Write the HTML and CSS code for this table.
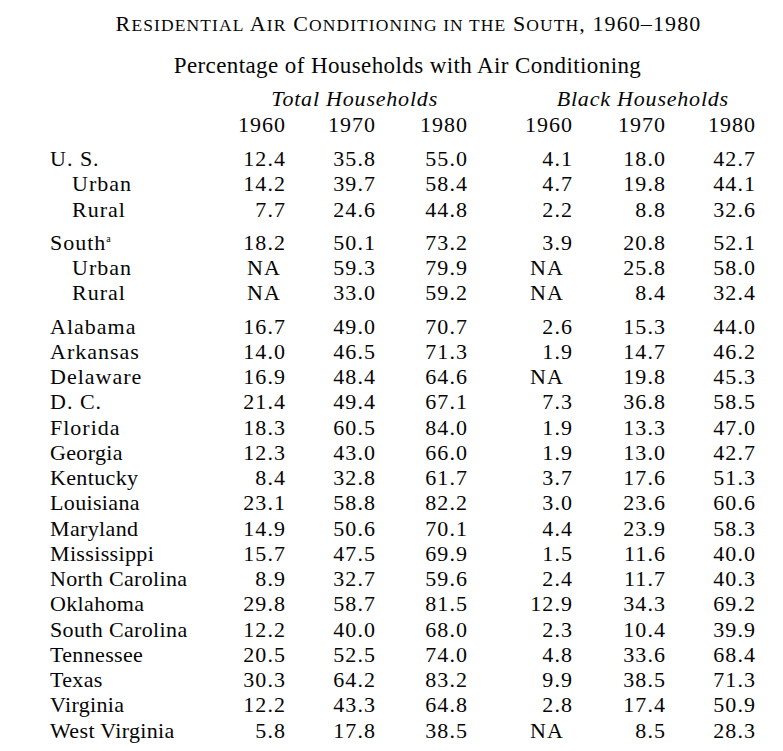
FILE: index.html
```html
<!DOCTYPE html>
<html>
<head>
<meta charset="utf-8">
<link rel="stylesheet" href="styles.css">
</head>
<body>
<div class="page">
  <h1 class="title"><span class="cap">R</span><span class="sc">esidential</span> <span class="cap">A</span><span class="sc">ir</span> <span class="cap">C</span><span class="sc">onditioning in the</span> <span class="cap">S</span><span class="sc">outh</span>, 1960–1980</h1>
  <h2 class="subtitle">Percentage of Households with Air Conditioning</h2>
  <div class="table">
    <div class="grp-head grp-total">Total Households</div>
    <div class="grp-head grp-black">Black Households</div>

    <div class="yr c1">1960</div><div class="yr">1970</div><div class="yr">1980</div>
    <div class="yr">1960</div><div class="yr">1970</div><div class="yr">1980</div>
  </div>

  <div class="table body wide">
    <div class="lbl first">U. S.</div><div class="n first">12.4</div><div class="n first">35.8</div><div class="n first">55.0</div><div class="n first">4.1</div><div class="n first">18.0</div><div class="n first">42.7</div>
    <div class="lbl sub">Urban</div><div class="n">14.2</div><div class="n">39.7</div><div class="n">58.4</div><div class="n">4.7</div><div class="n">19.8</div><div class="n">44.1</div>
    <div class="lbl sub">Rural</div><div class="n">7.7</div><div class="n">24.6</div><div class="n">44.8</div><div class="n">2.2</div><div class="n">8.8</div><div class="n">32.6</div>

    <div class="lbl gap">South<sup class="fn">a</sup></div><div class="n gap">18.2</div><div class="n gap">50.1</div><div class="n gap">73.2</div><div class="n gap">3.9</div><div class="n gap">20.8</div><div class="n gap">52.1</div>
    <div class="lbl sub">Urban</div><div class="n na">NA</div><div class="n">59.3</div><div class="n">79.9</div><div class="n na4">NA</div><div class="n">25.8</div><div class="n">58.0</div>
    <div class="lbl sub">Rural</div><div class="n na">NA</div><div class="n">33.0</div><div class="n">59.2</div><div class="n na4">NA</div><div class="n">8.4</div><div class="n">32.4</div>

    <div class="lbl gap">Alabama</div><div class="n gap">16.7</div><div class="n gap">49.0</div><div class="n gap">70.7</div><div class="n gap">2.6</div><div class="n gap">15.3</div><div class="n gap">44.0</div>
    <div class="lbl">Arkansas</div><div class="n">14.0</div><div class="n">46.5</div><div class="n">71.3</div><div class="n">1.9</div><div class="n">14.7</div><div class="n">46.2</div>
    <div class="lbl">Delaware</div><div class="n">16.9</div><div class="n">48.4</div><div class="n">64.6</div><div class="n na4">NA</div><div class="n">19.8</div><div class="n">45.3</div>
    <div class="lbl">D. C.</div><div class="n">21.4</div><div class="n">49.4</div><div class="n">67.1</div><div class="n">7.3</div><div class="n">36.8</div><div class="n">58.5</div>
    <div class="lbl">Florida</div><div class="n">18.3</div><div class="n">60.5</div><div class="n">84.0</div><div class="n">1.9</div><div class="n">13.3</div><div class="n">47.0</div>
  </div>

  <div class="table body narrow">
    <div class="lbl">Georgia</div><div class="n">12.3</div><div class="n">43.0</div><div class="n">66.0</div><div class="n">1.9</div><div class="n">13.0</div><div class="n">42.7</div>
    <div class="lbl">Kentucky</div><div class="n">8.4</div><div class="n">32.8</div><div class="n">61.7</div><div class="n">3.7</div><div class="n">17.6</div><div class="n">51.3</div>
    <div class="lbl">Louisiana</div><div class="n">23.1</div><div class="n">58.8</div><div class="n">82.2</div><div class="n">3.0</div><div class="n">23.6</div><div class="n">60.6</div>
    <div class="lbl">Maryland</div><div class="n">14.9</div><div class="n">50.6</div><div class="n">70.1</div><div class="n">4.4</div><div class="n">23.9</div><div class="n">58.3</div>
    <div class="lbl">Mississippi</div><div class="n">15.7</div><div class="n">47.5</div><div class="n">69.9</div><div class="n">1.5</div><div class="n">11.6</div><div class="n">40.0</div>
    <div class="lbl">North Carolina</div><div class="n">8.9</div><div class="n">32.7</div><div class="n">59.6</div><div class="n">2.4</div><div class="n">11.7</div><div class="n">40.3</div>
    <div class="lbl">Oklahoma</div><div class="n">29.8</div><div class="n">58.7</div><div class="n">81.5</div><div class="n">12.9</div><div class="n">34.3</div><div class="n">69.2</div>
    <div class="lbl">South Carolina</div><div class="n">12.2</div><div class="n">40.0</div><div class="n">68.0</div><div class="n">2.3</div><div class="n">10.4</div><div class="n">39.9</div>
    <div class="lbl">Tennessee</div><div class="n">20.5</div><div class="n">52.5</div><div class="n">74.0</div><div class="n">4.8</div><div class="n">33.6</div><div class="n">68.4</div>
    <div class="lbl">Texas</div><div class="n">30.3</div><div class="n">64.2</div><div class="n">83.2</div><div class="n">9.9</div><div class="n">38.5</div><div class="n">71.3</div>
    <div class="lbl">Virginia</div><div class="n">12.2</div><div class="n">43.3</div><div class="n">64.8</div><div class="n">2.8</div><div class="n">17.4</div><div class="n">50.9</div>
    <div class="lbl">West Virginia</div><div class="n">5.8</div><div class="n">17.8</div><div class="n">38.5</div><div class="n na4">NA</div><div class="n">8.5</div><div class="n">28.3</div>
  </div>
</div>
</body>
</html>
```

FILE: styles.css
```css
html, body {
  margin: 0;
  padding: 0;
  background: #ffffff;
}
body {
  font-family: "Liberation Serif", "Times New Roman", serif;
  color: #050505;
}
.page {
  width: 783px;
  height: 751px;
  overflow: hidden;
  box-sizing: border-box;
}
.title {
  margin: 11px 0 0 34px;
  font-size: 22px;
  font-weight: normal;
  line-height: 25px;
  text-align: center;
  letter-spacing: 1.1px;
}
.title .sc {
  text-transform: uppercase;
  font-size: 17.5px;
}
.subtitle {
  margin: 15px 0 0 32px;
  font-size: 23px;
  font-weight: normal;
  line-height: 25px;
  text-align: center;
  letter-spacing: 0.4px;
}
.table {
  display: grid;
  grid-template-columns: 233px 52px 90px 92px 105px 93px 90px;
  font-size: 22px;
  line-height: 25.25px;
}
.grp-head {
  font-style: italic;
  text-align: right;
  margin-top: 8px;
  line-height: 25px;
  letter-spacing: 0.8px;
}
.grp-total {
  grid-column: 2 / 5;
  padding-right: 29px;
}
.grp-black {
  grid-column: 5 / 8;
  padding-right: 26px;
}
.yr {
  text-align: right;
  line-height: 27px;
  letter-spacing: 1px;
  margin-right: -1px;
}
.c1 { grid-column: 2; }
.body .n {
  text-align: right;
  letter-spacing: 1.1px;
  margin-right: -1.1px;
}
.body .lbl {
  padding-left: 50px;
  letter-spacing: 1px;
}
.body .lbl.sub {
  padding-left: 72px;
}
.first {
  margin-top: 8px;
}
.gap {
  margin-top: 8px;
}
.narrow .lbl {
  letter-spacing: 0.35px;
}
.fn {
  font-size: 10px;
  vertical-align: 8px;
  line-height: 0;
  letter-spacing: 0;
}
.body .n.na {
  padding-right: 5px;
}
.body .n.na4 {
  padding-right: 9px;
}
```
